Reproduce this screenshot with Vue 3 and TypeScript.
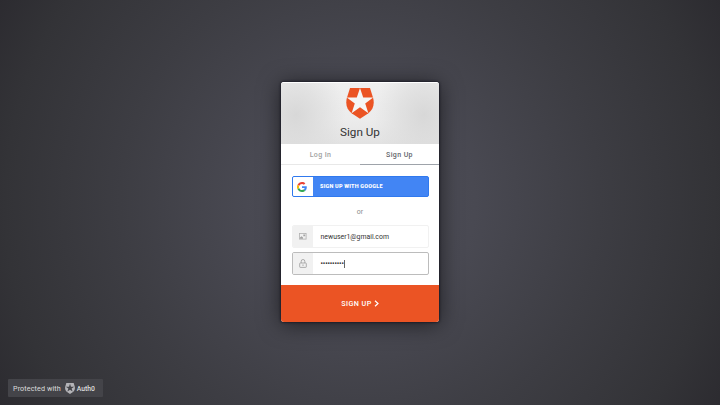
<script setup lang="ts">
import { ref } from 'vue'

type Tab = 'Log In' | 'Sign Up'
const tabs: Tab[] = ['Log In', 'Sign Up']
const active = ref<Tab>('Sign Up')
const email = 'newuser1@gmail.com'
const mask = '•'.repeat(10)
</script>

<template>
  <main class="page">
    <section class="card">
      <header class="head">
        <svg class="shield" viewBox="0 0 28 31">
          <path fill="#eb5424" d="M4 0H24L27 9.600C29 16.500 26.800 22 22.400 25.200L14 30.700L5.600 25.200C1.200 22-1 16.500 1 9.600Z" />
          <path fill="#f5f5f5" d="M14 0L17.200 9.600H27.200L19.200 15.500L22.400 25.300L14 19.200L5.600 25.300L8.800 15.500L.8 9.600H10.800Z" />
        </svg>
        <h1>Sign Up</h1>
      </header>
      <nav class="tabs">
        <button v-for="t in tabs" :key="t" :class="{ current: t === active }" @click="active = t">{{ t }}</button>
      </nav>
      <div class="body">
        <button class="google">
          <span class="google-icon">
            <svg viewBox="0 0 48 48">
              <path fill="#ea4335" d="M24 9.5c3.5 0 6.7 1.2 9.2 3.6l6.9-6.9C35.9 2.4 30.5 0 24 0 14.6 0 6.5 5.4 2.6 13.2l8 6.2C12.4 13.7 17.7 9.5 24 9.5z" />
              <path fill="#4285f4" d="M47 24.6c0-1.6-.2-3.1-.4-4.6H24v9h12.900c-.6 3-2.200 5.500-4.700 7.200l7.700 6C44.400 38 47 31.800 47 24.600z" />
              <path fill="#fbbc05" d="M10.500 28.600A14.500 14.500 0 0 1 10.500 19.400l-8-6.200a24 24 0 0 0 0 21.600z" />
              <path fill="#34a853" d="M24 48c6.500 0 11.900-2.100 15.900-5.800l-7.700-6c-2.200 1.500-4.900 2.300-8.200 2.300-6.300 0-11.600-4.200-13.500-9.900l-8 6.200C6.500 42.600 14.600 48 24 48z" />
            </svg>
          </span>
          <span class="google-text">SIGN UP WITH GOOGLE</span>
        </button>
        <p class="or">or</p>
        <div class="field">
          <span class="icon">
            <svg class="picture" viewBox="0 0 8 7">
              <rect x=".5" y=".5" width="6.600" height="5.600" fill="none" stroke="#b0b0b0" stroke-width=".8" />
              <path d="M1 5.800V4.500L2.600 3.200L4 4.500V5.800ZM4.300 1.400H6.200V3.300H4.300Z" fill="#a4a4a4" />
            </svg>
          </span>
          <span class="value">{{ email }}</span>
        </div>
        <div class="field focused">
          <span class="icon">
            <svg class="lock" viewBox="0 0 8 9">
              <path d="M2.200 4V2.300a1.800 1.800 0 0 1 3.600 0V4M1.300 4H6.700Q7.300 4 7.300 4.600V7.800Q7.300 8.400 6.700 8.400H1.300Q.7 8.400 .7 7.800V4.600Q.7 4 1.300 4ZM4 5.400V7" fill="none" stroke="#9c9c9c" stroke-width=".8" />
            </svg>
          </span>
          <span class="value"><span class="dots">{{ mask }}</span><i class="caret" /></span>
        </div>
      </div>
      <button class="submit">
        <span>SIGN UP</span>
        <svg viewBox="0 0 5 7"><path d="M1 .7L4 3.500L1 6.300" fill="none" stroke="#fff" stroke-width="1.200" /></svg>
      </button>
    </section>
    <footer class="badge">
      <span>Protected with</span>
      <svg viewBox="0 0 28 31">
        <path fill="#b4b4b8" fill-rule="evenodd" d="M3.600 0H24.400L27.300 9.600C29 16.500 26.800 22 22.400 25.200L14 31L5.600 25.200C1.200 22-1 16.500 .7 9.600ZM14 2L16.800 10.500H25.800L18.600 15.700L21.300 24.200L14 19L6.700 24.200L9.400 15.700L2.200 10.500H11.200Z" />
      </svg>
      <span class="brand">Auth0</span>
    </footer>
  </main>
</template>

<style>
body { margin: 0; overflow: hidden; }
</style>

<style scoped>
.page {
  box-sizing: border-box;
  position: relative;
  width: 720px;
  height: 405px;
  padding: 82px 281px 0;
  background: radial-gradient(circle at 50% 50%, #50505a 0, #494952 115px, #3d3d43 240px, #333337 355px, #2c2b30 415px);
  font-family: Roboto, sans-serif;
}
button {
  border: 0;
  padding: 0;
  margin: 0;
  background: none;
  font-family: inherit;
}
.card {
  width: 158px;
  height: 240px;
  display: flex;
  flex-direction: column;
  overflow: hidden;
  border-radius: 3px;
  background: #fff;
  box-shadow: 0 0 2px 1px rgba(20, 20, 32, .65), 0 2px 22px rgba(0, 0, 0, .6);
}
.head {
  box-sizing: border-box;
  height: 62px;
  flex: none;
  padding-top: 5px;
  display: flex;
  flex-direction: column;
  align-items: center;
  border-top: 1px solid #fff;
  background:
    radial-gradient(ellipse 50px 56px at 15px 32px, rgba(212, 212, 212, .85) 0, rgba(218, 218, 218, .6) 50%, rgba(225, 225, 225, 0) 100%),
    radial-gradient(ellipse 50px 56px at 143px 32px, rgba(212, 212, 212, .85) 0, rgba(218, 218, 218, .6) 50%, rgba(225, 225, 225, 0) 100%),
    linear-gradient(#efefef, #ececec 60%, #e2e2e2);
}
.shield { width: 28px; height: 31px; flex: none; }
h1 {
  margin: 6px 0 0;
  font-size: 11.700px;
  line-height: 14px;
  font-weight: 400;
  color: #333;
}
.tabs { display: flex; height: 21px; flex: none; }
.tabs button {
  box-sizing: border-box;
  flex: 1;
  padding-top: 1px;
  border-bottom: 1px solid #e8e8e8;
  color: #a0a0a0;
  font-size: 7px;
  font-weight: 500;
  letter-spacing: .4px;
  line-height: 18px;
}
.tabs .current { color: #62656b; border-bottom-color: #9ea3aa; }
.body {
  flex: 1;
  display: flex;
  flex-direction: column;
  padding: 11px 10.500px 0 10.500px;
}
.google {
  box-sizing: border-box;
  display: flex;
  height: 21px;
  flex: none;
  border: 1px solid #3079ee;
  border-radius: 2px;
  background: #4285f4;
  overflow: hidden;
}
.google-icon {
  width: 20px;
  background: #fff;
  display: flex;
  align-items: center;
  justify-content: center;
}
.google-icon svg { width: 10px; height: 10px; margin-right: 1px; }
.google-text {
  padding-left: 7.500px;
  color: #fff;
  font-size: 5.5px;
  font-weight: 900;
  letter-spacing: .2px;
  line-height: 19px;
}
.or {
  margin: 11px 0 9px;
  text-align: center;
  font-size: 7px;
  line-height: 8px;
  color: #8c8c8c;
}
.field {
  box-sizing: border-box;
  display: flex;
  height: 23px;
  flex: none;
  border: 1px solid #f1f1f1;
  border-radius: 2px;
  overflow: hidden;
}
.field.focused { margin-top: 4px; border-color: #bcbcbc; }
.icon {
  width: 20.500px;
  display: flex;
  align-items: center;
  justify-content: center;
  background: #f1f1f1;
}
.picture { width: 8px; height: 7px; }
.lock { width: 8px; height: 9px; }
.value {
  display: flex;
  align-items: center;
  padding-left: 7.500px;
  font-size: 6.900px;
  color: #333;
}
.dots { font-size: 6.800px; font-weight: 700; letter-spacing: -.12px; }
.caret { width: 1px; height: 8px; background: #666; }
.submit {
  height: 37px;
  flex: none;
  display: flex;
  align-items: center;
  justify-content: center;
  gap: 2px;
  background: #eb5424;
  color: #fff;
  font-size: 7.200px;
  font-weight: 500;
  letter-spacing: .45px;
}
.submit svg { width: 5px; height: 7px; }
.badge {
  position: absolute;
  left: 8px;
  bottom: 8px;
  box-sizing: border-box;
  width: 95px;
  height: 18px;
  padding-left: 5px;
  display: flex;
  align-items: center;
  border-radius: 1px;
  background: #444449;
  color: #ddd;
  font-size: 7.200px;
  letter-spacing: .1px;
}
.badge svg { width: 10px; height: 11px; margin: 0 2px 0 4px; }
.brand { padding-top: 1px; font-size: 6.800px; font-weight: 500; letter-spacing: 0; }
</style>
